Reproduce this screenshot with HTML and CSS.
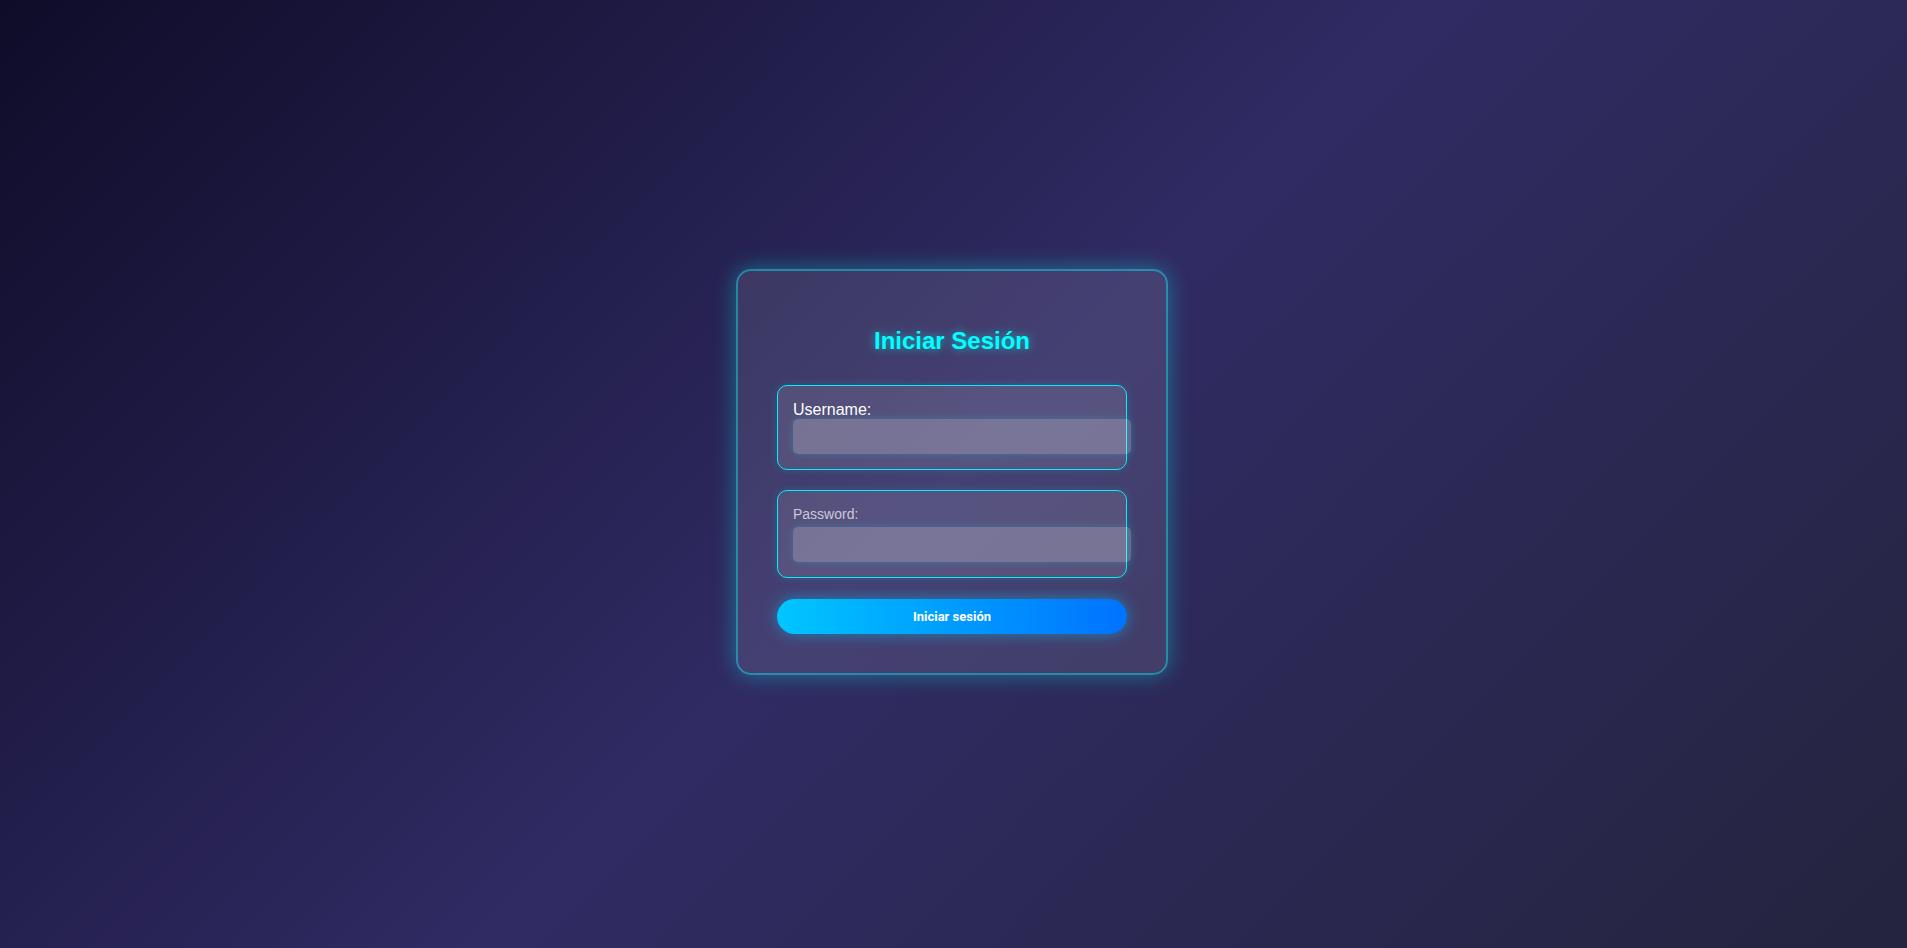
FILE: index.html
```html
<!DOCTYPE html>
<html lang="es">
<head>
<meta charset="utf-8">
<title>Iniciar Sesión</title>
<link rel="stylesheet" href="styles.css">
</head>
<body>
<main class="page">
  <form class="card">
    <h2 class="title">Iniciar Sesión</h2>
    <div class="field">
      <label class="label label-main" for="username">Username:</label>
      <input class="input" id="username" type="text">
    </div>
    <div class="field">
      <label class="label label-muted" for="password">Password:</label>
      <input class="input" id="password" type="password">
    </div>
    <button class="btn" type="button">Iniciar sesión</button>
  </form>
</main>
</body>
</html>
```

FILE: styles.css
```css
html, body {
  margin: 0;
  padding: 0;
}

body {
  font-family: "Liberation Sans", Arial, sans-serif;
  background: linear-gradient(135deg, #0f0c29, #302b63, #24243e);
  min-height: 100vh;
  color: #fff;
}

.page {
  min-height: 100vh;
  display: flex;
  align-items: center;
  justify-content: center;
  padding-right: 3px;
  padding-bottom: 4px;
  box-sizing: border-box;
}

.card {
  width: 350px;
  padding: 39px;
  border: 2px solid rgba(0, 255, 255, 0.4);
  border-radius: 15px;
  background: rgba(255, 255, 255, 0.1);
  box-shadow: 0 0 22px rgba(0, 255, 255, 0.35);
  display: flex;
  flex-direction: column;
}

.title {
  margin: 17px 0 30px;
  font-size: 24px;
  font-weight: bold;
  text-align: center;
  color: #00ffff;
  text-shadow: 0 0 10px rgba(0, 255, 255, 0.6);
}

.field {
  border: 1px solid #00f0ff;
  border-radius: 10px;
  padding: 15px;
  background: rgba(255, 255, 255, 0.1);
  box-shadow: 0 0 10px rgba(0, 255, 255, 0.15);
  margin-bottom: 20px;
}

.label {
  display: block;
}

.label-main {
  font-size: 16px;
  color: #ffffff;
}

.label-muted {
  font-size: 14px;
  color: rgba(255, 255, 255, 0.7);
  margin-bottom: 5px;
}

.input {
  display: block;
  width: 100%;
  height: 15px;
  padding: 10px;
  border: none;
  border-radius: 5px;
  background: rgba(255, 255, 255, 0.2);
  box-shadow: 0 0 8px rgba(0, 255, 255, 0.2);
  color: #fff;
  font-family: "Liberation Sans", Arial, sans-serif;
  font-size: 13.333px;
  outline: none;
}

.btn {
  height: 35px;
  width: 100%;
  margin-top: 1px;
  border: none;
  border-radius: 18px;
  background: linear-gradient(90deg, #00c6ff, #0072ff);
  box-shadow: 0 0 15px rgba(0, 198, 255, 0.5);
  color: #fff;
  font-family: Roboto, "Liberation Sans", sans-serif;
  font-size: 13px;
  font-weight: bold;
  cursor: pointer;
}
```
